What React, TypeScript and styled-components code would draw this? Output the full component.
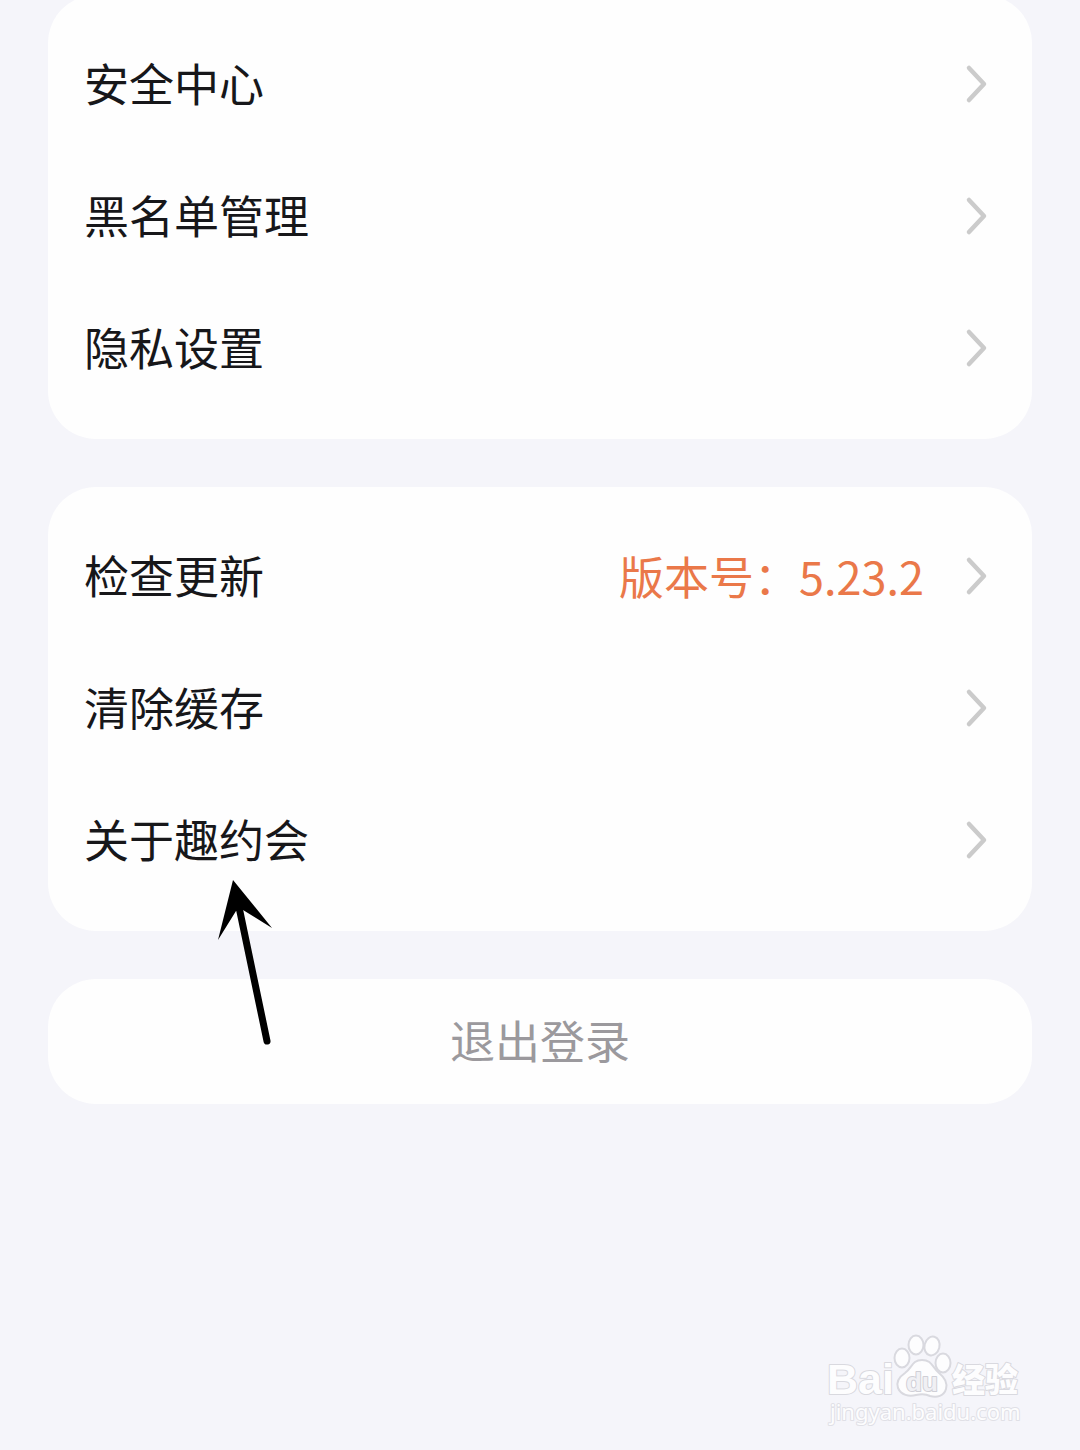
import React from "react";
import styled, { createGlobalStyle } from "styled-components";

const GlobalStyle = createGlobalStyle`
  * {
    box-sizing: border-box;
  }

  body {
    margin: 0;
    background: #f5f5fa;
    font-family: "Noto Sans CJK SC", "Noto Sans", sans-serif;
  }
`;

const Viewport = styled.div`
  position: relative;
  min-height: 100vh;
  overflow: hidden;
`;

const Page = styled.main`
  display: flex;
  flex-direction: column;
  gap: 48px;
  margin-top: -5px;
  padding: 0 48px 48px;
`;

const Card = styled.ul`
  margin: 0;
  padding: 23px 0 25px;
  list-style: none;
  background: #fefefe;
  border-radius: 48px;
`;

const Item = styled.li`
  position: relative;
`;

const Row = styled.button`
  display: flex;
  align-items: center;
  gap: 40px;
  width: 100%;
  height: 132px;
  padding: 0 44px 0 36px;
  border: 0;
  background: transparent;
  color: #17171a;
  font: inherit;
  font-size: 45px;
  line-height: 64px;
  text-align: left;
  cursor: pointer;
`;

const Label = styled.span`
  flex: 1;
  padding-bottom: 2px;
`;

const Value = styled.span`
  color: #ea7849;
`;

const ChevronIcon = styled.svg`
  flex: none;
  width: 24px;
  height: 40px;
  fill: none;
  stroke: #cbcbcb;
  stroke-width: 4.5;
  stroke-linecap: round;
  stroke-linejoin: round;
`;

const LogoutButton = styled.button`
  height: 125px;
  padding: 0 36px 4px;
  border: 0;
  border-radius: 48px;
  background: #fefefe;
  color: #9b999d;
  font: inherit;
  font-size: 45px;
  line-height: 64px;
  cursor: pointer;
`;

const Pointer = styled.svg`
  position: absolute;
  top: 105px;
  left: 168px;
  z-index: 1;
  width: 60px;
  height: 168px;
  pointer-events: none;
`;

const Watermark = styled.svg`
  position: absolute;
  right: 56px;
  bottom: 20px;
  width: 200px;
  height: 100px;
  fill: #fdfdfe;
  stroke: #d9d9df;
  stroke-width: 2;
  stroke-linejoin: round;

  text {
    paint-order: stroke;
  }
`;

const BrandText = styled.text`
  font: bold 43px "Liberation Sans", Arial, sans-serif;
`;

const PawText = styled.text`
  font: bold 26px "Liberation Sans", Arial, sans-serif;
  fill: #f0f0f4;
  stroke: #cfcfd6;
`;

const ProductText = styled.text`
  font: 900 33px "Noto Sans CJK SC", sans-serif;
`;

const SiteText = styled.text`
  font: 22px "Noto Sans", sans-serif;
  stroke: #e0e0e6;
`;

type Entry = { label: string; value?: string; pointed?: boolean };

const privacyEntries: Entry[] = [
  { label: "安全中心" },
  { label: "黑名单管理" },
  { label: "隐私设置" },
];

const aboutEntries: Entry[] = [
  { label: "检查更新", value: "版本号：5.23.2" },
  { label: "清除缓存" },
  { label: "关于趣约会", pointed: true },
];

function Chevron() {
  return (
    <ChevronIcon viewBox="0 0 24 40" aria-hidden="true">
      <path d="M5 4 20 20 5 36" />
    </ChevronIcon>
  );
}

function PointerArrow() {
  return (
    <Pointer viewBox="0 0 60 168" aria-hidden="true">
      <path d="M17 1 56 49 27 31 20 32 2 61Z" fill="#000" />
      <path d="M23 28 51 162" stroke="#000" strokeWidth="7" strokeLinecap="round" />
    </Pointer>
  );
}

function SettingsCard({ entries }: { entries: Entry[] }) {
  return (
    <Card>
      {entries.map((entry) => (
        <Item key={entry.label}>
          <Row type="button">
            <Label>{entry.label}</Label>
            {entry.value && <Value>{entry.value}</Value>}
            <Chevron />
          </Row>
          {entry.pointed && <PointerArrow />}
        </Item>
      ))}
    </Card>
  );
}

function BaiduWatermark() {
  return (
    <Watermark viewBox="0 0 200 100">
      <BrandText x="3" y="64">Bai</BrandText>
      <ellipse cx="78" cy="28" rx="7.5" ry="9.5" />
      <ellipse cx="92" cy="15" rx="7.5" ry="9.5" />
      <ellipse cx="108" cy="16" rx="7.5" ry="9.5" transform="rotate(14 108 16)" />
      <ellipse cx="119" cy="33" rx="7.5" ry="9.5" />
      <path d="M98 30C88 30 88 38 81 43C75 47 72 52 74 58C77 65 85 67 92 65C97 64 102 64 106 66C113 68 120 66 122 59C124 52 120 47 115 43C108 37 108 30 98 30Z" />
      <PawText x="82" y="61">du</PawText>
      <ProductText x="128" y="62">经验</ProductText>
      <SiteText x="6" y="90">jingyan.baidu.com</SiteText>
    </Watermark>
  );
}

export default function App() {
  return (
    <Viewport>
      <GlobalStyle />
      <Page>
        <SettingsCard entries={privacyEntries} />
        <SettingsCard entries={aboutEntries} />
        <LogoutButton type="button">退出登录</LogoutButton>
      </Page>
      <BaiduWatermark />
    </Viewport>
  );
}
